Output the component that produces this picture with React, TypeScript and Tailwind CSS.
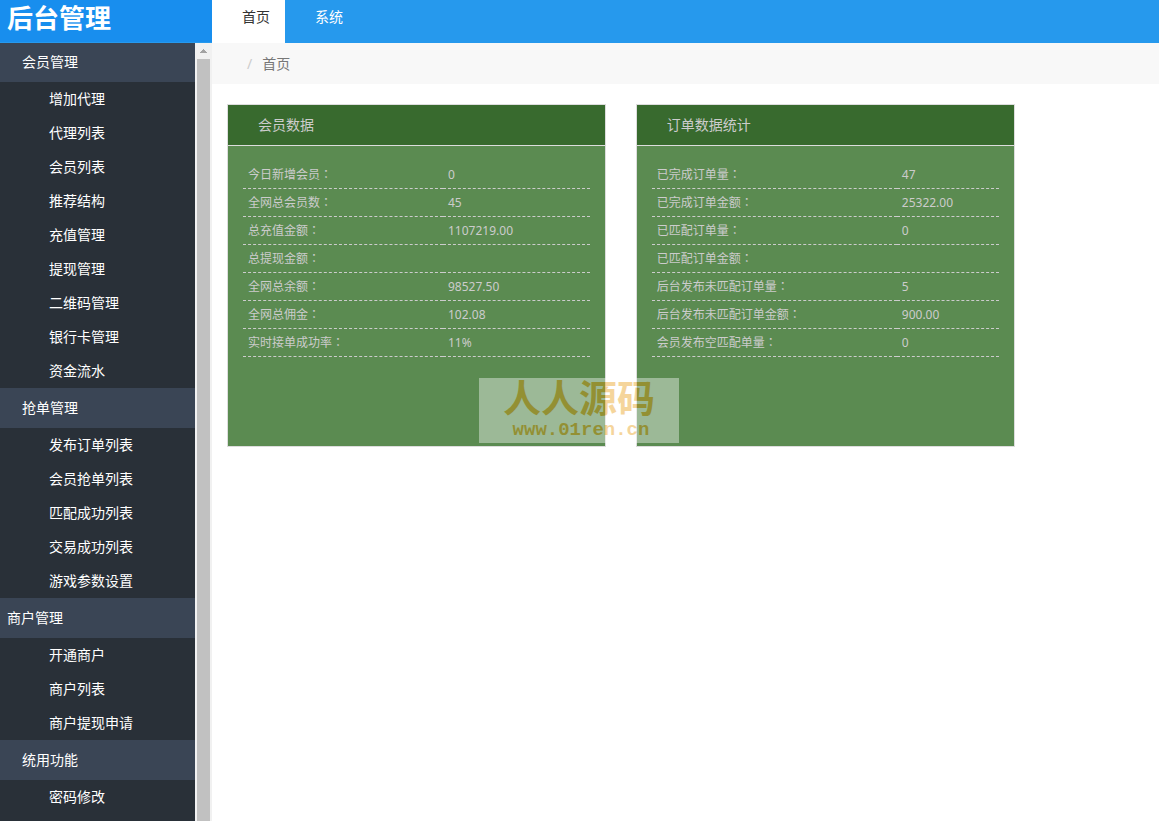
import clsx from 'clsx';

type MenuGroup = { title: string; flush?: boolean; items: string[] };
type Row = { label: string; value: string };

const menu: MenuGroup[] = [
    {
        title: '会员管理',
        items: [
            '增加代理',
            '代理列表',
            '会员列表',
            '推荐结构',
            '充值管理',
            '提现管理',
            '二维码管理',
            '银行卡管理',
            '资金流水'
        ]
    },
    {
        title: '抢单管理',
        items: [
            '发布订单列表',
            '会员抢单列表',
            '匹配成功列表',
            '交易成功列表',
            '游戏参数设置'
        ]
    },
    {
        title: '商户管理',
        flush: true,
        items: ['开通商户', '商户列表', '商户提现申请']
    },
    { title: '统用功能', items: ['密码修改'] }
];

const memberRows: Row[] = [
    { label: '今日新增会员', value: '0' },
    { label: '全网总会员数', value: '45' },
    { label: '总充值金额', value: '1107219.00' },
    { label: '总提现金额', value: '' },
    { label: '全网总余额', value: '98527.50' },
    { label: '全网总佣金', value: '102.08' },
    { label: '实时接单成功率', value: '11%' }
];

const orderRows: Row[] = [
    { label: '已完成订单量', value: '47' },
    { label: '已完成订单金额', value: '25322.00' },
    { label: '已匹配订单量', value: '0' },
    { label: '已匹配订单金额', value: '' },
    { label: '后台发布未匹配订单量', value: '5' },
    { label: '后台发布未匹配订单金额', value: '900.00' },
    { label: '会员发布空匹配单量', value: '0' }
];

const Header = () => (
    <header className="flex h-[43px] shrink-0 bg-[#2699ed]">
        <h1 className="w-[212px] shrink-0 border-b border-[#2699ed] bg-[#188eee] pl-[7px] text-[26px] leading-9 font-bold text-white">
            后台管理
        </h1>
        <nav className="flex leading-[34px]">
            <a href="#home" className="bg-white pr-[15px] pl-[30px] text-[#333]">
                首页
            </a>
            <a href="#system" className="pr-[15px] pl-[30px] text-white">
                系统
            </a>
        </nav>
    </header>
);

const Sidebar = () => (
    <aside className="flex w-[212px] shrink-0">
        <nav className="flex-1 overflow-hidden bg-[#293038] text-white">
            {menu.map((group, i) => (
                <section key={group.title}>
                    <h2
                        className={clsx(
                            'bg-[#3a4555]',
                            i === 0 ? 'h-[39px] leading-[38px]' : 'h-10 leading-10',
                            group.flush ? 'pl-[7px]' : 'pl-[22px]'
                        )}
                    >
                        {group.title}
                    </h2>
                    <ul>
                        {group.items.map((item) => (
                            <li key={item}>
                                <a href="#menu" className="block pl-[49px] leading-[34px]">
                                    {item}
                                </a>
                            </li>
                        ))}
                    </ul>
                </section>
            ))}
        </nav>
        {/* scroll track */}
        <div className="flex w-[17px] flex-col bg-[#f1f1f1] px-[2px]">
            <div className="flex h-4 shrink-0 items-center justify-center">
                <svg width="7" height="4" viewBox="0 0 7 4" fill="#a3a3a3" shapeRendering="crispEdges">
                    <path d="M3 0h1v1h1v1h1v1h1v1H0V3h1V2h1V1h1z" />
                </svg>
            </div>
            <div className="flex-1 bg-[#c1c1c1]" />
        </div>
    </aside>
);

type StatCardProps = { title: string; rows: Row[]; labelWidth: string };

const StatCard = ({ title, rows, labelWidth }: StatCardProps) => (
    <section className="w-2/5 border border-[#ddd] bg-[#5b8b51] text-[#ccc]">
        <h2 className="border-b border-[#ddd] bg-[#386a2e] pl-[30px] leading-10">
            {title}
        </h2>
        <div className="px-[15px] pt-[15px] pb-[89px]">
            <table className="w-full table-fixed border-separate border-spacing-0 text-xs">
                <tbody>
                    {rows.map((row) => (
                        <tr key={row.label} className="h-7">
                            <th
                                scope="row"
                                className={clsx(
                                    'border-b border-dashed border-[#ccc] px-[5px] text-left font-normal',
                                    labelWidth
                                )}
                            >
                                {row.label}
                                {/* the TC face centres the colon in its cell */}
                                <span className="font-['Noto_Sans_CJK_TC',sans-serif] leading-none" lang="zh-TW">
                                    ：
                                </span>
                            </th>
                            <td className="border-b border-dashed border-[#ccc] px-[5px]">
                                {row.value}
                            </td>
                        </tr>
                    ))}
                </tbody>
            </table>
        </div>
    </section>
);

const Watermark = () => (
    <div className="pointer-events-none absolute top-[378px] left-[479px] h-[65px] w-[200px] bg-white text-center text-[#e89908] opacity-40">
        <p className="text-[38px] leading-[38px] font-bold">人人源码</p>
        <p className="pt-1 pl-1 font-['Liberation_Mono',monospace] text-[19px] leading-5 font-bold">
            www.01ren.cn
        </p>
    </div>
);

export default function App() {
    return (
        <div className="relative flex h-screen flex-col overflow-hidden bg-white font-['Noto_Sans','Noto_Sans_CJK_SC',sans-serif] text-sm">
            <Header />
            <div className="flex min-h-0 flex-1">
                <Sidebar />
                <main className="min-w-0 flex-1">
                    <div className="flex h-[41px] items-center gap-[10px] bg-[#f8f8f8] pl-[35px]">
                        <span className="text-[#ccc]">/</span>
                        <span className="text-[#777]">首页</span>
                    </div>
                    <div className="mt-5 flex items-start gap-[30px] before:-mr-[15px]">
                        <StatCard title="会员数据" rows={memberRows} labelWidth="w-[200px]" />
                        <StatCard title="订单数据统计" rows={orderRows} labelWidth="w-[245px]" />
                    </div>
                </main>
            </div>
            <Watermark />
        </div>
    );
}
